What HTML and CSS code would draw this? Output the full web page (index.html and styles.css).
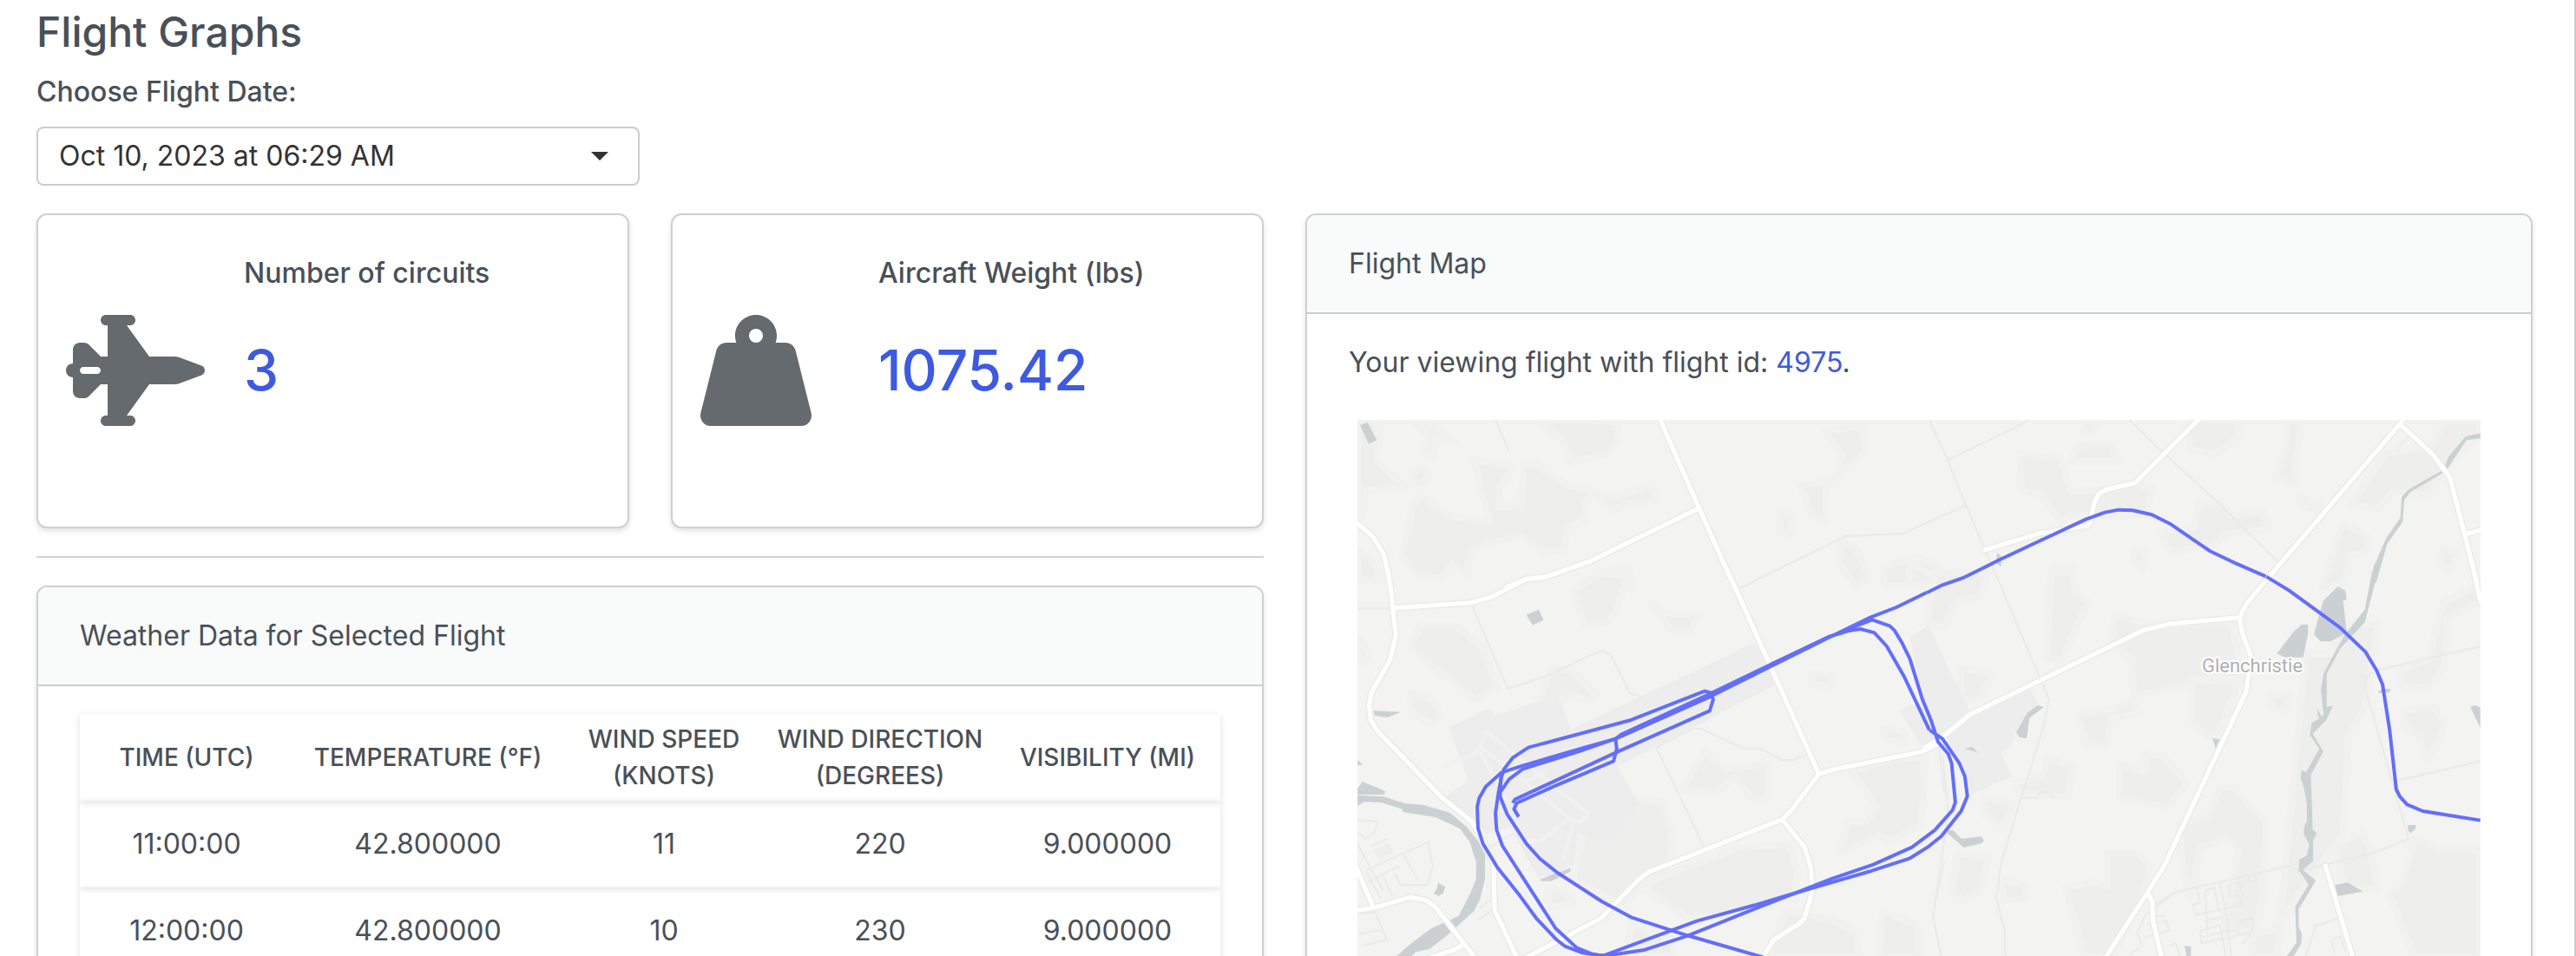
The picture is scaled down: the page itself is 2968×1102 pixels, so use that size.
FILE: index.html
```html
<!DOCTYPE html>
<html lang="en">
<head>
<meta charset="utf-8">
<meta name="viewport" content="width=device-width, initial-scale=1">
<title>Flight Graphs</title>
<link rel="stylesheet" href="styles.css">
</head>
<body>
<main class="page">
  <h1 class="page-title">Flight Graphs</h1>
  <label class="field-label" for="flight-date">Choose Flight Date:</label>
  <div class="select-wrap">
    <select class="select" id="flight-date">
      <option>Oct 10, 2023 at 06:29 AM</option>
    </select>
    <svg class="select-caret" viewBox="0 0 20 10" aria-hidden="true"><path d="M0 0h20L10 10z"/></svg>
  </div>

  <div class="columns">
    <div class="column">
      <div class="stats">
        <section class="card stat">
          <h2 class="stat-label">Number of circuits</h2>
          <svg class="stat-icon" viewBox="0 0 640 512" aria-hidden="true"><path d="M160 24c0-13.300 10.700-24 24-24H296c13.300 0 24 10.700 24 24s-10.700 24-24 24H280L384 192H500.400c7.700 0 15.300 1.400 22.500 4.100L625 234.400c9 3.400 15 12 15 21.600s-6 18.200-15 21.600L522.900 315.900c-7.200 2.700-14.800 4.100-22.500 4.100H384L280 464h16c13.300 0 24 10.700 24 24s-10.700 24-24 24H184c-13.300 0-24-10.700-24-24s10.700-24 24-24h8V320H160l-54.600 54.600c-6 6-14.100 9.400-22.600 9.400H64c-17.700 0-32-14.300-32-32V288c-17.700 0-32-14.300-32-32s14.300-32 32-32V160c0-17.700 14.300-32 32-32H82.700c8.500 0 16.600 3.400 22.600 9.400L160 192h32V48h-8c-13.300 0-24-10.700-24-24zM80 240c-8.800 0-16 7.200-16 16s7.200 16 16 16h64c8.800 0 16-7.200 16-16s-7.200-16-16-16H80z"/></svg>
          <p class="stat-value">3</p>
        </section>
        <section class="card stat">
          <h2 class="stat-label">Aircraft Weight (lbs)</h2>
          <svg class="stat-icon" viewBox="0 0 512 512" aria-hidden="true"><path d="M224 96a32 32 0 1 1 64 0 32 32 0 1 1 -64 0zm122.500 32c3.500-10 5.500-20.800 5.500-32c0-53-43-96-96-96s-96 43-96 96c0 11.200 1.900 22 5.500 32H120c-22 0-41.200 15-46.600 36.400l-72 288c-3.600 14.300-.4 29.500 8.700 41.200S33.200 512 48 512H464c14.800 0 28.700-6.800 37.800-18.500s12.300-26.800 8.700-41.200l-72-288C433.200 143 414 128 392 128H346.500z"/></svg>
          <p class="stat-value">1075.42</p>
        </section>
      </div>

      <hr class="rule">

      <section class="card">
        <h2 class="card-header">Weather Data for Selected Flight</h2>
        <div class="card-body">
          <table class="weather">
            <colgroup>
              <col class="col-time"><col class="col-temp"><col class="col-speed"><col class="col-direction"><col class="col-visibility">
            </colgroup>
            <thead>
              <tr><th scope="col">TIME (UTC)</th><th scope="col">TEMPERATURE (°F)</th><th scope="col">WIND SPEED<br>(KNOTS)</th><th scope="col">WIND DIRECTION<br>(DEGREES)</th><th scope="col">VISIBILITY (MI)</th></tr>
            </thead>
            <tbody>
              <tr><td>11:00:00</td><td>42.800000</td><td>11</td><td>220</td><td>9.000000</td></tr>
              <tr><td>12:00:00</td><td>42.800000</td><td>10</td><td>230</td><td>9.000000</td></tr>
            </tbody>
          </table>
        </div>
      </section>
    </div>

    <section class="card">
      <h2 class="card-header">Flight Map</h2>
      <div class="card-body">
        <p class="map-note">Your viewing flight with flight id: <a class="flight-link" href="#flight-4975">4975</a>.</p>
        <svg class="map" viewBox="0 0 1294 700" role="img" aria-label="Flight path over a map of the Glenchristie area">
          <defs>
            <!-- Road centre lines, drawn twice: once as casing, once as fill -->
            <g id="roads">
              <g transform="translate(-84 -254) scale(.4783 .3333)">
                <path d="M903 755L998 1065L1085 1345M998 1068L734 1252L625 1307L580 1314L535 1340"/>
                <path d="M172 1115L214 1168L240 1230L256 1345"/>
              </g>
              <g transform="translate(636 -254) scale(.4898 .3333)">
                <path d="M682 758L531 980L463 1003L445 1018L435 1048L424 1120L418 1128L302 1156L178 1212"/>
                <path d="M1164 758L843 1310M1155 778L1230 880L1271 960L1306 1158L1335 1325M1306 1158L1350 1142"/>
              </g>
              <g transform="translate(-24 176) scale(.4464 .3333)">
                <path d="M132 -10L140 60L153 218L137 305L90 415L84 460L88 510L108 552L275 782L348 860L378 925L405 1010L408 1168L470 1345"/>
                <path d="M150 122L348 104L400 84L490 22L535 16L590 -8M1008 -10L1127 345L1245 697L1175 820L1150 854L805 1036L777 1065L682 1196L470 1345"/>
                <path d="M1245 697L1280 682L1510 620L1572 580M1150 854L1208 950L1224 1020L1228 1100L1208 1195L1195 1213L1128 1270L1100 1330"/>
                <path d="M40 1172L100 1158L190 1123L230 1133L255 1157L330 1285L365 1345M44 1000L92 1150M330 1285L305 1304L235 1335"/>
              </g>
              <g transform="translate(656 176) scale(.477 .3333)">
                <path d="M838 -5L775 103L760 140L758 155L585 178L522 200L103 492L40 567L-5 606"/>
                <path d="M755 155L763 215L783 290L772 410L575 1010L533 1107L430 1335M533 1107L544 1135L547 1210L568 1335M963 1014L1030 1335M1321 -5L1337 100"/>
              </g>
            </g>
          </defs>

          <!-- Woodland and terrain shading -->
          <g class="land">
            <g transform="translate(-84 -254) scale(.4783 .3333)">
              <path d="M176 762h54l-8 140 70 92-95 12-10 90-11-8zM310 765l60 30 42 42-60-15zM340 845l25-10-5 50-24-10zM610 762h140l55 10-5 65-25 45-85 25-20-75zM455 900l85 20 5 20-25 45-5 80 55-5 5-140 30-5 70 70 70 25-20 35-4 65-40 25-8 80-48 5-52-55-90 25-35 30-8 80-36-40-30 50-50-10-40-65 25-180 20-30 70 70 95 20z"/>
              <path d="M305 940l30-15 15 30-20 25-25-5zM735 1015l75 10 75-38 10 55-70 8-35 25zM1303 800l90-15 5 95-60 60-35 60v110l-30-10-30-110 90-25 10-80zM1192 1080l30 10-5 70-25-15zM1340 1185l35 15 35 110-30 30-45-80zM1440 1275l75-40 60 30v70h-130zM178 1220l30 20 22 60-20 20h-32zM720 1345l50-60 60-5 5 65z"/>
            </g>
            <g transform="translate(636 -254) scale(.4898 .3333)">
              <path d="M260 880l95 15 25 115 110-10 30-22 50 20-12 90-180 5-25 20-40-90-50-20zM395 850l75-5 25 60h-115zM410 762h40l-25 50-18-10zM650 762h120l5 60-60 60-50-20-15-50zM885 765h35l-15 220-45-20 25-100zM915 1030l50 20-5 25-40-15z"/>
              <path d="M680 1050l60 5 15 40 75-20 15 65-95 15-45 50-95 10-20-65 80-20zM1120 880l110-30 30-85h83v50l-83 110-40 100-80-15-40 60-60-15 30-70zM1020 1120l55 40v60l-40 10-10 100-55 10 25-110zM1255 1205l30 15-10 60-25-15zM530 1210l25 10-5 55-25-25zM0 1250l60 60 60-25 10 50H0zM340 1270h45v70h-45z"/>
            </g>
            <g transform="translate(-24 176) scale(.4464 .3333)">
              <path d="M610 60l80-60 60 15-30 120-20 40-60 10zM215 185l90 0 70 70 40 140-55 45-110-115-60-70zM190 415l60 25 20 60-30 20-50-45zM56 230l30 50-15 30-15-10zM810 105l40 40h90l-20 35-5 30-50-10zM550 330l60 10 60 80-20 25-60-30-20 85-45-60zM950 620l55 60 110-20v120l-40 5-50-80-45 60-90-15zM1228 350l50 5-5 40-45-10z"/>
              <path d="M740 780l100 10 30 140-20 110-120 105-120-80 30-180 100-30zM780 1080l260-130 130-10 20 90-5 100-140 50-140 15zM1330 690l100-45 90-5-10 230-80 60-30-20-100 60 20-110h50l25-50zM1160 1170l120 30 60 45 10 85H1110zM760 1210l110 60v60H750zM1410 1170l90 50v110h-100zM1410 540l60 10v40l-50-10zM545 1100l45-5 20 45-60 20z"/>
            </g>
            <g transform="translate(656 176) scale(.477 .3333)">
              <path d="M20 0h130l-20 80-60 25-30 85-40-20zM300 0h50l10 70 30 30-65 205-35-10zM455 150l60 20 110 10 110-10 30 200-125 0-10 20-130 35-5-130-50-45zM80 330l75 20-20 80-50 15zM640 370l110 10-5 40-50 160-55-60zM1250 100l87-60v60l-80 60-5 160-40 80-70-10 10-60 60-30z"/>
              <path d="M365 490l90-20 50-25 10 40-70 20-10 95-50-10zM530 630l40 5 60 90-45 85-120-30v-120l60 30zM290 645l65 25-15 105-120-10v-40l60-20zM710 740h30l55 90 25 20-10 280-20 140-5 60h60l70-1050h60l15-100 100 0-30 280-40 100-15 340-60 120-110 220h-120l40-280-30-40-60 30-30 180-20-150-5-110 70-30zM1180 920l60 40h97v370h-160l-60-220 30-30z"/>
              <path d="M1150 480l75-15 25 50-10 60-30 75-20-80-35-40zM75 970l75 15-20 115-40 35-30-30zM435 970l75 0 30 40-20 120-70 200h-70l-45-240 70-20 30 15zM135 780l80 20-35 80-40-40zM180 1060l60 25-5 45-50 5zM990 940l60-40 20 50 20 140-60 10-30-50zM830 420l50 5-15 60-35-20z"/>
            </g>
          </g>
          <!-- Airfield -->
          <g class="airfield">
            <g transform="translate(-24 176) scale(.4464 .3333)">
              <path d="M290 535L395 468L407 495L570 425L605 540L875 372L1082 240L1132 390L725 670L780 800L712 945L624 905L612 1010L525 1055L450 880L387 905L348 860L275 782L340 720z"/>
              <path d="M1480 220L1528 185L1570 300V590L1510 600L1452 475L1510 445z"/>
              <path d="M95 960l40-25 15 30-40 25z"/>
            </g>
            <g transform="translate(656 176) scale(.477 .3333)">
              <path d="M0 180L103 475L40 567L0 590zM103 492L250 400L270 455L215 550L205 600L180 625L205 705L110 768L78 658L40 567z"/>
            </g>
          </g>
          <g class="taxiway">
            <g transform="translate(-24 176) scale(.4464 .3333)">
              <path d="M387 550L650 835L630 865L600 850L370 600zM280 670L370 618L440 790M600 850L530 925L455 935M610 870L585 995M540 690L480 730"/>
            </g>
          </g>

          <!-- Local streets and boundaries -->
          <g class="minor">
            <g transform="translate(-84 -254) scale(.4783 .3333)">
              <path d="M508 762L540 868M1553 762L1568 815M1130 1320L1350 1165L1490 1155L1575 1100"/>
            </g>
            <g transform="translate(636 -254) scale(.4898 .3333)">
              <path d="M47 762L90 902L133 1058L210 1320M90 902L285 762M133 1058L0 1145M517 762L600 880L720 1040L868 1255M1178 810L1152 855"/>
            </g>
            <g transform="translate(-24 176) scale(.4464 .3333)">
              <path d="M54 124H145M348 110L442 402L540 358L685 268L708 285L758 418L790 430M1040 55L1130 -5M825 605L948 948M825 605L920 540H940L1050 608H1090L1150 648H1180L1215 628M1555 600L1568 760"/>
              <path d="M54 855L105 862L98 900L75 920L54 900M75 1030L235 932L248 1015L235 1080L165 1080L150 1040M90 945L130 920M75 1030L115 1130M54 940L120 1100M115 1040L145 1120M170 970L212 1070M80 1070L160 1015M54 1180L100 1175L130 1270L65 1290M60 1250L120 1235M365 1200L405 1165M370 1160L400 1130M395 950L460 900L525 1060M1568 1000L1538 1190L1560 1326"/>
            </g>
            <g transform="translate(656 176) scale(.477 .3333)">
              <path d="M165 0L295 438L280 540L180 1000L168 1125L188 1240L190 1326M38 630L52 830L15 1190L35 1326M1337 255L1085 338L1060 362V405L1164 922L1080 970L900 1032L875 1015L600 1105L555 1148M1140 718L1337 653M228 780H265L272 760H298L304 778H311"/>
              <path d="M600 1105L580 1130L530 1180L508 1245L520 1290L490 1320M530 1215L580 1205L585 1240L525 1262M545 1188H575M652 1088L660 1140L642 1150L650 1185L760 1150L755 1115L735 1120L727 1085L755 1070L763 1120M673 1100L695 1090L705 1165M673 1100L678 1250M708 1070L722 1170L735 1326M660 1240L708 1220L722 1326M660 1240L663 1282L785 1245L790 1215L785 1195L750 1208L752 1250M785 1245L762 1285M775 1045L780 1072L793 1065V1042M670 1205L740 1182M668 1260L745 1235M935 1225L995 1195M940 1220L915 1326M978 1270L1000 1258L1010 1310M978 1270L985 1315M588 1290L600 1280L612 1326"/>
            </g>
          </g>

          <!-- Rivers and ponds -->
          <g class="water">
            <g transform="translate(-84 -254) scale(.4783 .3333)">
              <path d="M182 780L200 770L222 832L203 846z"/>
            </g>
            <g transform="translate(636 -254) scale(.4898 .3333)">
              <path d="M1343 808L1308 820L1268 890L1255 935L1172 1005L1158 1028L1155 1100L1122 1170L1092 1270L1085 1325H1098L1124 1190L1160 1115L1164 1040L1178 1012L1262 940L1310 832L1343 826z"/>
              <path d="M206 1220l10 15v35l-12-12z"/>
            </g>
            <g transform="translate(-24 176) scale(.4464 .3333)">
              <path d="M490 146l32-18 12 36-28 18zM95 478l71 4-35 19-32-6zM54 648l13 17H54zM67 723l58 32-2 13H54v-20z"/>
              <path d="M54 770L120 774L175 798L222 803L292 830L335 878L366 930L383 975V1060L370 1130L355 1170L310 1225L285 1255L240 1302L205 1312L190 1330H152L190 1285L245 1230L315 1188L345 1110L360 1060V1000L343 930L318 885L255 846L170 828V818L115 795L72 793L54 807z"/>
              <path d="M525 1062l35-20 44-20v12l-30 20-20 13h-25zM262 1072l18 15-5 22-12 9-12-8 8-18z"/>
            </g>
            <g transform="translate(656 176) scale(.477 .3333)">
              <path d="M993 48l18 14 3 30-8 6 8 110-38 30h-25l-16-24 22-115zM905 180h16v30l-12 83h-45l-18-13 40-75z"/>
              <path d="M1076 -5L1058 128L1010 215L990 265L958 350L952 410L959 492L945 508L930 520L925 560L948 610L916 690L905 684L903 710L911 745L918 800V860L911 880V905L924 940L918 978L900 993L898 1030L910 1052L922 1080L890 1155L893 1280L868 1330H885L904 1285L906 1250L898 1225V1165L940 1065L908 1028L933 998V930L942 900L932 890L928 700L958 618L932 558L965 510L981 460L966 465V350L1000 260L1058 172L1090 -5z"/>
              <path d="M942 468l12 30-8 6zM268 459l15 6-35 38-7 70-17-3-8-18 27-67zM90 610l20-7 14 20-16-8zM690 573l18 4-10 32zM50 892h14l20 28 48-7 6 14-6 10-43 14-38-48zM1090 412l12-10h19l-4 13-25 2zM1313 465l12-6 12 8v70zM1162 873h19v13l-13 16-6-12zM985 1080l32-8 37 31-62 16zM622 1291l16 3v32h-10z"/>
            </g>
          </g>

          <use class="road-casing" href="#roads"/>
          <use class="road" href="#roads"/>

          <text class="place" x="1031" y="291" text-anchor="middle">Glenchristie</text>

          <!-- Recorded flight path -->
          <g class="flight">
            <g transform="translate(636 -254) scale(.4898 .3333)">
              <path d="M130 1306L212 1246L300 1185L415 1106L460 1082L492 1073L525 1075L570 1090L615 1123L706 1215L770 1260L838 1303"/>
            </g>
            <g transform="translate(-24 176) scale(.4464 .3333)">
              <path d="M1523 69L1445 120L1378 155L1270 225L1120 325L960 432L720 575L640 605L480 668L425 692L385 740L368 780L363 810L365 885L378 938L415 1020L470 1112L515 1195L568 1270L590 1293L635 1315L680 1324L690 1324L930 1205L1080 1150L1225 1092L1380 1032L1480 988L1525 950"/>
              <path d="M1545 890L1485 950L1385 1010L1280 1058L1100 1152L905 1257L795 1305L690 1326L660 1320L620 1298L565 1230L428 945L413 890L410 832L418 760L425 710L432 680L455 640L495 605L760 510L950 410L965 415L972 440L963 478L725 620L460 785L455 797"/>
              <path d="M470 845L458 818L465 797L560 740L715 652L723 610L720 575L735 560L960 422L1120 318L1270 222L1320 202L1352 195L1388 208L1420 255L1465 360L1530 545"/>
              <path d="M1320 196L1382 163L1428 185L1440 200L1458 240L1480 300L1510 430"/>
              <path d="M720 575L640 612L480 680L445 715L422 760L422 775L440 835L490 938L525 990L570 1038L685 1138L760 1192L905 1255L1110 1334M425 692L422 760"/>
            </g>
            <g transform="translate(656 176) scale(.477 .3333)">
              <path d="M92 16L38 43L0 70M820 14L875 62L998 190L1060 275L1087 340L1101 388L1118 545L1134 750L1143 775L1160 802L1198 825L1337 857"/>
              <path d="M-13 430L10 510L27 585L52 628L60 660L69 795L62 822L20 890M7 545L38 575L78 658L92 705L98 773L83 825L35 912L1 951"/>
            </g>
          </g>
        </svg>
      </div>
    </section>
  </div>
</main>
</body>
</html>
```
FILE: styles.css
```css
* { box-sizing: border-box; }

body {
  margin: 0;
  background: #fff;
  color: #495057;
  font: 400 32px/48px Inter, "Liberation Sans", sans-serif;
}

h1, h2, p { margin: 0; }

.page {
  height: 100vh;
  overflow: hidden;
  padding: 8px 48px 0 42px;
  border-right: 2px solid #ccc;
}

.page-title {
  margin-bottom: 16px;
  font-size: 48px;
  line-height: 58px;
  font-weight: 500;
}

.field-label {
  display: block;
  margin-bottom: 16px;
  font-weight: 500;
}

.select-wrap {
  position: relative;
  width: 695px;
  max-width: 100%;
  margin-bottom: 32px;
}

.select {
  display: block;
  width: 100%;
  height: 68px;
  padding: 0 64px 0 24px;
  appearance: none;
  border: 2px solid #ccc;
  border-radius: 8px;
  background: #fff;
  color: #333;
  font: inherit;
}

.select-caret {
  position: absolute;
  right: 36px;
  top: 29px;
  width: 20px;
  height: 10px;
  fill: #333;
  pointer-events: none;
}

.columns {
  display: grid;
  grid-template-columns: minmax(0, 1fr) minmax(0, 1fr);
  gap: 48px;
  align-items: start;
}

.stats {
  display: grid;
  grid-template-columns: 1fr 1fr;
  gap: 48px;
}

.card {
  border: 2px solid #d0d0d0;
  border-radius: 12px;
  background: #fff;
  box-shadow: 0 3px 6px rgba(0, 0, 0, 0.12);
}

.stat {
  display: grid;
  grid-template-columns: 1fr 2fr;
  grid-template-rows: 48px 128px;
  row-gap: 24px;
  align-items: center;
  min-height: 363px;
  padding: 43px 32px;
}

.stat-label {
  grid-column: 2;
  font-size: 32px;
  font-weight: 500;
}

.stat-icon {
  height: 128px;
  fill: #656a6e;
}

.stat-value {
  color: #3d5ae0;
  font-size: 64px;
  line-height: 76px;
  font-weight: 500;
}

.rule {
  height: 2px;
  margin: 32px 0;
  border: 0;
  background: #d2d2d2;
}

.card-header {
  padding: 32px 48px;
  border-bottom: 2px solid #ccc;
  border-radius: 10px 10px 0 0;
  background: #f9fafa;
  font-size: 32px;
  font-weight: 400;
}

.card-body { padding: 32px 48px; }

.weather {
  width: 100%;
  table-layout: fixed;
  border-collapse: collapse;
  text-align: center;
}

.col-time { width: 246px; }
.col-temp { width: 310px; }
.col-speed { width: 234px; }
.col-direction { width: 264px; }
.col-visibility { width: 260px; }

.weather tr {
  height: 100px;
  box-shadow: 0 2px 8px rgba(0, 0, 0, 0.12);
}

.weather th, .weather td { padding: 0; }

.weather th {
  font-size: 28px;
  line-height: 42px;
  font-weight: 500;
}

.flight-link { color: #3d5ae0; text-decoration: none; }

.map {
  display: block;
  width: calc(100% - 20px);
  margin: 42px 10px 0;
  background: #f3f3f1;
}

.map path { vector-effect: non-scaling-stroke; }

.land {
  fill: #eeeeec;
  stroke: #f1f1ef;
  stroke-width: 8px;
  stroke-linejoin: round;
}

.airfield { fill: #ededee; }
.water { fill: #cbd1d3; }

.taxiway, .minor, .road-casing, .road, .flight {
  fill: none;
  stroke-linejoin: round;
}

.taxiway { stroke: #f1f1f1; stroke-width: 4px; }
.minor { stroke: #eaebe9; stroke-width: 2px; }
.road-casing { stroke: #ebecea; stroke-width: 8px; stroke-linecap: round; }
.road { stroke: #fff; stroke-width: 5px; stroke-linecap: round; }
.flight { stroke: #636efa; stroke-width: 4px; }

.place {
  fill: #b0b0b0;
  stroke: #fff;
  stroke-width: 4px;
  stroke-linejoin: round;
  paint-order: stroke;
  font: 400 22px Roboto, "Liberation Sans", sans-serif;
}
```
